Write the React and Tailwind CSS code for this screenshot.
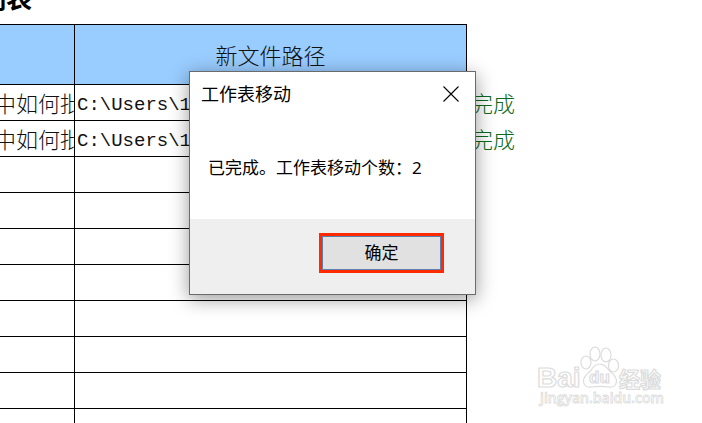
const rows = [
  { source: "中如何批", target: "C:\\Users\\1", status: "完成" },
  { source: "中如何批", target: "C:\\Users\\1", status: "完成" },
  {}, {}, {}, {}, {}, {}, {}, {},
];

function SheetTable() {
  return (
    <table className="w-full table-fixed border-separate border-spacing-0 text-[22px] leading-[34px] font-light">
      <colgroup>
        <col className="w-[75px]" />
        <col className="w-[392px]" />
        <col />
      </colgroup>
      <thead>
        <tr className="h-[61px]">
          <th className="border-y border-r border-black bg-[#99ccff] p-0"></th>
          <th className="border-y border-r border-black bg-[#99ccff] p-0 font-light">新文件路径</th>
          <th className="p-0"></th>
        </tr>
      </thead>
      <tbody>
        {rows.map((row, i) => (
          <tr key={i} className="h-9">
            <td className="overflow-hidden border-r border-b border-black p-0">
              <div className="-ml-1.5 h-[34px] whitespace-nowrap">{row.source}</div>
            </td>
            <td className="overflow-hidden border-r border-b border-black p-0 pt-1 pl-0.5 font-['Liberation_Mono','Noto_Sans_CJK_SC',monospace] text-[19px] leading-[30px]">
              {row.target}
            </td>
            <td className="p-0 pl-1 text-[#0a6b1c]">{row.status}</td>
          </tr>
        ))}
      </tbody>
    </table>
  );
}

function MessageBox() {
  return (
    <div
      role="dialog"
      aria-labelledby="box-title"
      className="absolute top-[71px] left-[189px] w-[287px] border border-[#6b6b6b] bg-white text-black shadow-[0_4px_18px_rgba(0,0,0,0.4)]"
    >
      <div className="flex h-11 items-center justify-between pr-4 pl-[11px]">
        <h2 id="box-title" className="text-[18px] leading-6">工作表移动</h2>
        <button type="button" aria-label="关闭" className="h-4 w-4">
          <svg viewBox="0 0 16 16" className="h-4 w-4" fill="none" stroke="#000" strokeWidth="1.1">
            <path d="M.5 .5 15.500 15.500M15.500 .5.5 15.500" />
          </svg>
        </button>
      </div>
      <p className="h-[103px] pt-10 pl-[18px] text-[17px] leading-6">已完成。工作表移动个数：2</p>
      <div className="flex h-[75px] justify-end bg-[#efefef] pt-3.5 pr-[31px]">
        <button
          type="button"
          className="h-10 w-[125px] border-3 border-[#ff2a00] bg-[#e1e1e1] text-[17px] leading-6 inset-ring inset-ring-[#5b7fb0]"
        >
          确定
        </button>
      </div>
    </div>
  );
}

function Watermark() {
  return (
    <svg
      viewBox="0 0 130 66"
      className="absolute right-9 bottom-3 h-[66px] w-[130px]"
      fill="#fff"
      stroke="#dcdcdc"
      strokeWidth="1.2"
      fontFamily="'Liberation Sans','Noto Sans CJK SC',sans-serif"
      fontWeight="700"
    >
      <text x="1" y="42" fontSize="28">Bai</text>
      <ellipse cx="50" cy="17.500" rx="5" ry="6.500" />
      <ellipse cx="59" cy="9" rx="5" ry="7" />
      <ellipse cx="70" cy="10" rx="5" ry="7" />
      <ellipse cx="77.500" cy="20.500" rx="5" ry="6.500" />
      <path d="M63.500 19c-5 0-7 4-9 7-3 3-7 5-7 10 0 4 3 7 8 6 6-1 11-1 17 0 5 1 8-2 8-6 0-5-4-7-7-10-2-3-5-7-10-7z" />
      <text x="53" y="38" fontSize="17">du</text>
      <text x="83" y="42" fontSize="21">经验</text>
      <text
        x="4"
        y="58"
        fontSize="14"
        fontWeight="600"
        strokeWidth=".8"
        fontFamily="'Open Sans',sans-serif"
      >
        jingyan.baidu.com
      </text>
    </svg>
  );
}

export default function App() {
  return (
    <main className="relative h-screen overflow-hidden bg-white font-['Noto_Sans','Noto_Sans_CJK_SC',sans-serif] text-[#111]">
      <div className="flex h-6 items-end">
        <h1 className="-ml-5 pb-2.5 text-[26px] leading-8 font-bold text-black">列表</h1>
      </div>
      <SheetTable />
      <MessageBox />
      <Watermark />
    </main>
  );
}
